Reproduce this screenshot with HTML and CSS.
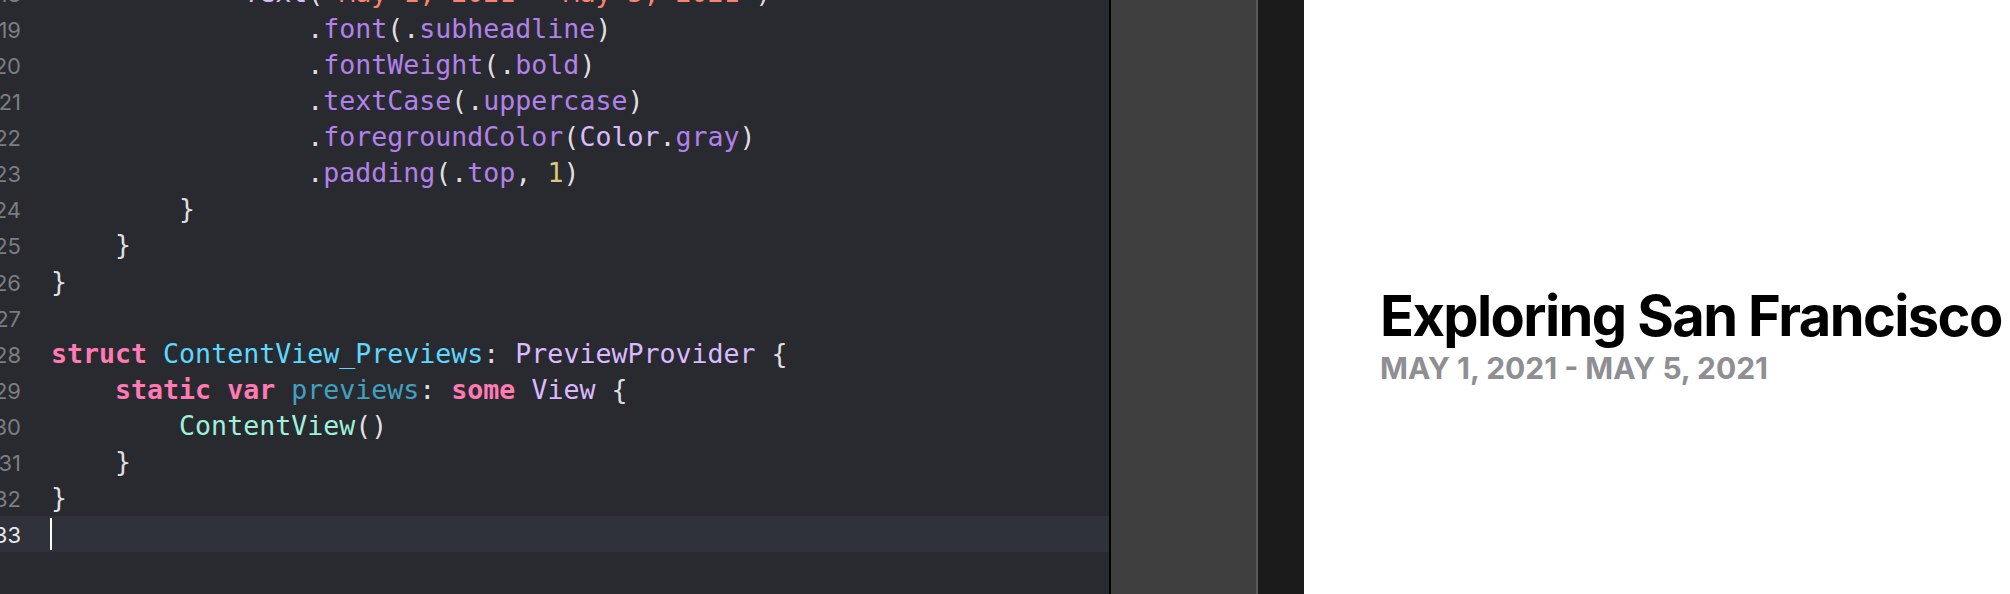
FILE: index.html
```html
<!DOCTYPE html>
<html>
<head>
<meta charset="utf-8">
<link rel="stylesheet" href="styles.css">
</head>
<body>
<div class="app">
  <div class="editor">
    <div class="lines">
      <div class="line"><span class="ln">18</span><span class="code">            <span class="st">Text</span>(<span class="str">"May 1, 2021 - May 5, 2021"</span>)</span></div>
      <div class="line"><span class="ln">19</span><span class="code">                .<span class="sf">font</span>(.<span class="sf">subheadline</span>)</span></div>
      <div class="line"><span class="ln">20</span><span class="code">                .<span class="sf">fontWeight</span>(.<span class="sf">bold</span>)</span></div>
      <div class="line"><span class="ln">21</span><span class="code">                .<span class="sf">textCase</span>(.<span class="sf">uppercase</span>)</span></div>
      <div class="line"><span class="ln">22</span><span class="code">                .<span class="sf">foregroundColor</span>(<span class="st">Color</span>.<span class="sf">gray</span>)</span></div>
      <div class="line"><span class="ln">23</span><span class="code">                .<span class="sf">padding</span>(.<span class="sf">top</span>, <span class="num">1</span>)</span></div>
      <div class="line"><span class="ln">24</span><span class="code">        }</span></div>
      <div class="line"><span class="ln">25</span><span class="code">    }</span></div>
      <div class="line"><span class="ln">26</span><span class="code">}</span></div>
      <div class="line"><span class="ln">27</span><span class="code"> </span></div>
      <div class="line"><span class="ln">28</span><span class="code"><span class="kw">struct</span> <span class="td">ContentView_Previews</span>: <span class="st">PreviewProvider</span> {</span></div>
      <div class="line"><span class="ln">29</span><span class="code">    <span class="kw">static</span> <span class="kw">var</span> <span class="od">previews</span>: <span class="kw">some</span> <span class="st">View</span> {</span></div>
      <div class="line"><span class="ln">30</span><span class="code">        <span class="pt">ContentView</span>()</span></div>
      <div class="line"><span class="ln">31</span><span class="code">    }</span></div>
      <div class="line"><span class="ln">32</span><span class="code">}</span></div>
      <div class="line current"><span class="ln">33</span><span class="code"><span class="cursor"></span></span></div>
    </div>
  </div>
  <div class="divider"></div>
  <div class="gray-panel"></div>
  <div class="gray-edge"></div>
  <div class="dark-panel"></div>
  <div class="preview">
    <div class="preview-text">
      <div class="title">Exploring San Francisco</div>
      <div class="subtitle">May 1, 2021 - May 5, 2021</div>
    </div>
  </div>
</div>
</body>
</html>
```

FILE: styles.css
```css
html, body {
  margin: 0;
  padding: 0;
  height: 100%;
  overflow: hidden;
}

.app {
  display: flex;
  width: 2010px;
  height: 594px;
}

.editor {
  width: 1109px;
  flex: none;
  background: #292a30;
  overflow: hidden;
}

.lines {
  margin-top: -25px;
  margin-left: -40px;
}

.line {
  display: flex;
  align-items: baseline;
  height: 36.07px;
  line-height: 36.07px;
}

.line.current {
  background: #2f323a;
}

.ln {
  flex: none;
  width: 61px;
  text-align: right;
  font-family: "Inter", "Liberation Sans", sans-serif;
  font-size: 22px;
  color: #7c7d82;
}

.current .ln {
  color: #e8e8ea;
}

.code {
  margin-left: 30px;
  white-space: pre;
  font-family: "DejaVu Sans Mono", "Liberation Mono", monospace;
  font-size: 26.6px;
  color: #dfdfe0;
}

.kw { color: #ff7ab2; font-weight: bold; }
.st { color: #dabaff; }
.sf { color: #b281eb; }
.td { color: #5dd8ff; }
.od { color: #41a1c0; }
.pt { color: #9ef1dd; }
.num { color: #d9c97c; }
.str { color: #ff8170; }

.cursor {
  display: inline-block;
  width: 2px;
  height: 32px;
  margin-left: -1px;
  vertical-align: -7px;
  background: #ffffff;
}

.divider {
  width: 2px;
  flex: none;
  background: #000000;
}

.gray-panel {
  width: 145px;
  flex: none;
  background: #3f3f3f;
}

.gray-edge {
  width: 2px;
  flex: none;
  background: #5a5a5a;
}

.dark-panel {
  width: 46px;
  flex: none;
  background: #1b1b1b;
}

.preview {
  flex: 1;
  background: #ffffff;
  overflow: hidden;
}

.preview-text {
  padding-top: 282px;
  padding-left: 76px;
  font-family: "Inter", "Liberation Sans", sans-serif;
  font-weight: bold;
}

.title {
  font-size: 56px;
  line-height: 68px;
  letter-spacing: -1.6px;
  color: #000000;
  white-space: nowrap;
}

.subtitle {
  font-size: 30px;
  line-height: 36px;
  color: #8e8e93;
  text-transform: uppercase;
  white-space: nowrap;
}
```
